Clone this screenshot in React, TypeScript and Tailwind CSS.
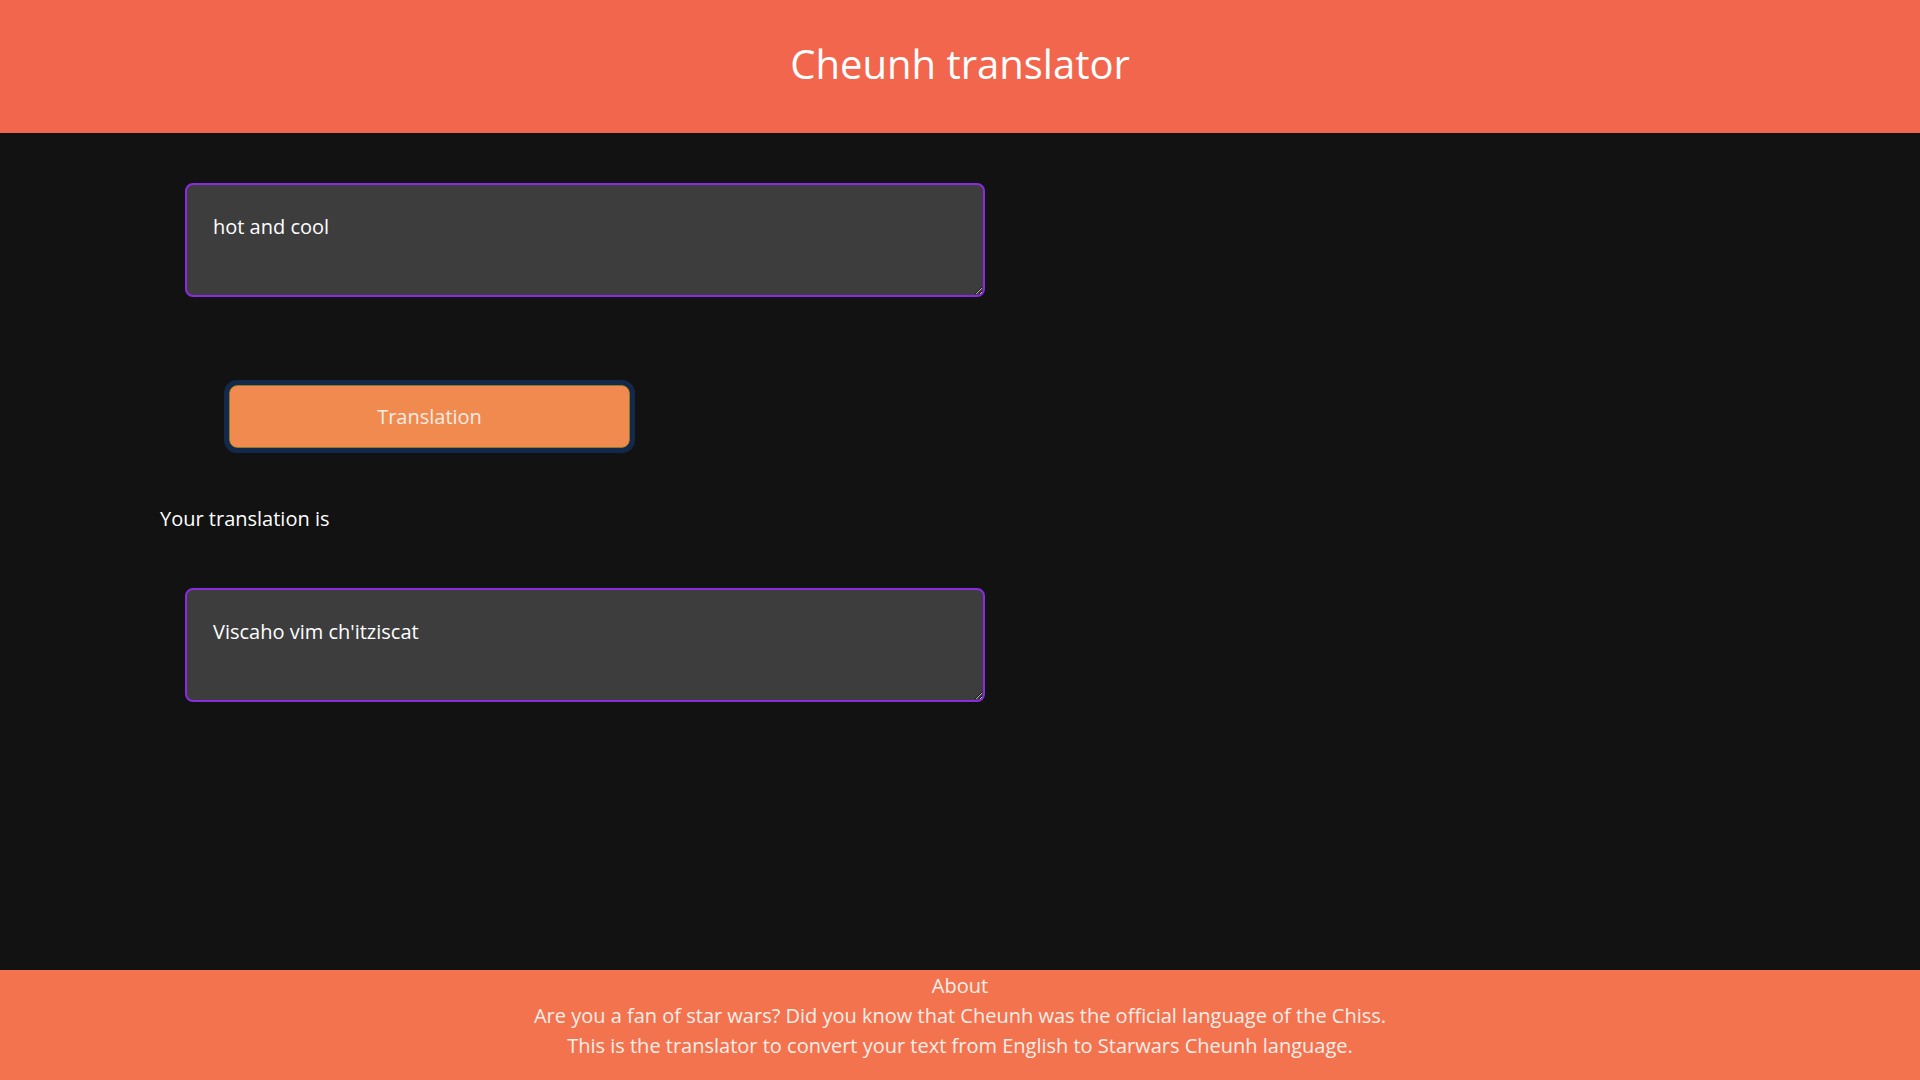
export default function App() {
  return (
    <div
      className="min-h-screen flex flex-col bg-[#121212] text-[#f5f5f5]"
      style={{ fontFamily: '"Comic Sans MS", "Open Sans", "Noto Sans", sans-serif' }}
    >
      <header className="h-[133px] flex items-center justify-center bg-[#f2664d] pb-[6px]">
        <h1 className="text-[40px] leading-none text-white">Cheunh translator</h1>
      </header>

      <main className="flex-1 pl-[160px] pt-[50px]">
        <textarea
          className="block ml-[25px] w-[800px] h-[114px] rounded-lg border-2 border-[#8a2be2] bg-[#3d3d3d] px-[26px] pt-[27px] pb-[17px] text-[20px] text-white outline-none"
          defaultValue="hot and cool"
        />

        <button className="block mt-[88px] ml-[69px] w-[401px] h-[63px] rounded-[8px] border border-[#8a7a2a] bg-[#f08a4e] text-[20px] text-[#f8ece6] outline-[5px] outline-solid outline-[#13294b]">
          Translation
        </button>

        <p className="mt-[57px] text-[20px] leading-[28px] text-white">Your translation is</p>

        <textarea
          className="block mt-[55px] ml-[25px] w-[800px] h-[114px] rounded-lg border-2 border-[#8a2be2] bg-[#3d3d3d] px-[26px] pt-[27px] pb-[17px] text-[20px] text-white outline-none"
          defaultValue="Viscaho vim ch'itziscat"
        />
      </main>

      <footer className="h-[110px] bg-[#f3734f] pt-px text-center text-[20px] leading-[30px] text-[#fbeee9]">
        <p>About</p>
        <p>Are you a fan of star wars? Did you know that Cheunh was the official language of the Chiss.</p>
        <p>This is the translator to convert your text from English to Starwars Cheunh language.</p>
      </footer>
    </div>
  );
}
